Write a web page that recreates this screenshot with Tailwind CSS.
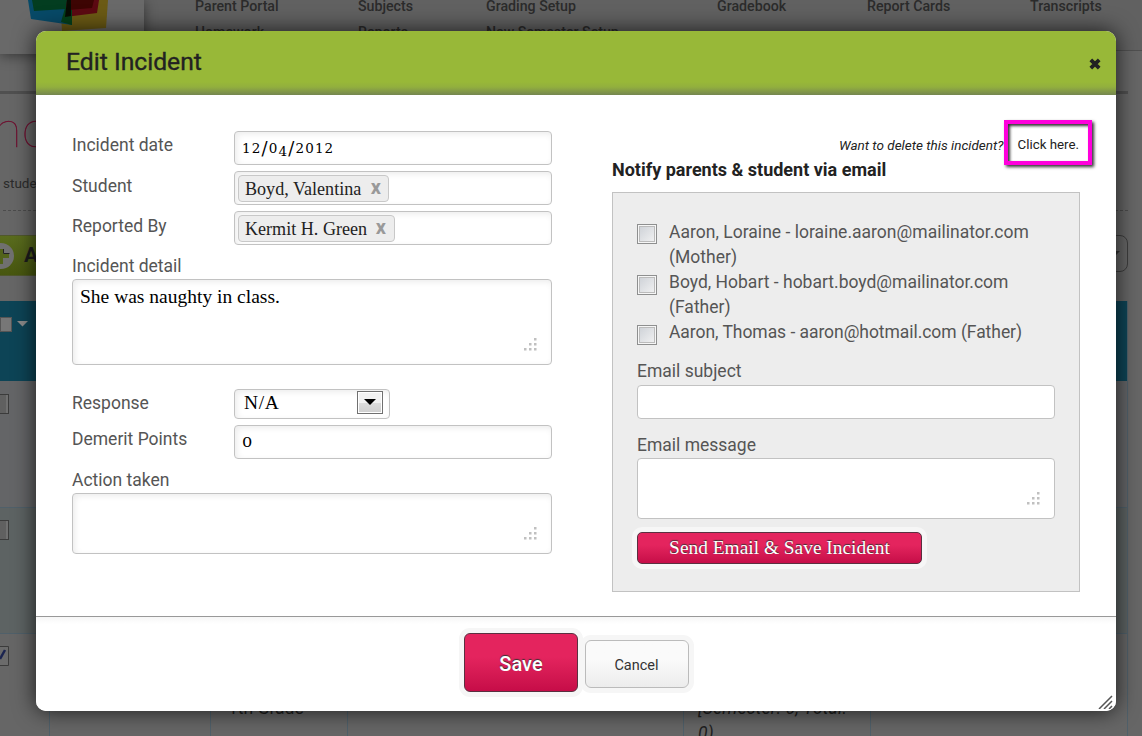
<!DOCTYPE html>
<html lang="en">
<head>
<meta charset="utf-8">
<title>Edit Incident</title>
<script src="https://cdn.jsdelivr.net/npm/@tailwindcss/browser@4"></script>
</head>
<body class="relative h-[736px] w-[1142px] overflow-hidden bg-[#666] font-['Roboto',sans-serif] text-[17.5px] text-[#555]">

<!-- Dimmed page -->
<div class="flex h-full flex-col">
  <header class="flex h-[51px] shrink-0 border-b border-[#505050] bg-[#616161]">
    <div class="z-10 flex h-[54px] w-[144px] shrink-0 justify-start bg-[#696969] pl-[28px] shadow-[0_2px_12px_rgba(0,0,0,.45)]">
      <svg width="82" height="31" viewBox="28 0 82 31">
        <path d="M60 0H108L106 28L62 31Z" fill="#6b5a14"/>
        <path d="M28 0H70L72 25L31 19Z" fill="#074a68"/>
        <path d="M66 0H99L97 13L65 17Z" fill="#5c0a12"/>
        <path d="M32 0H67L66 9L34 11Z" fill="#033d20"/>
        <path d="M65 8L72 10V25L61 22Z" fill="#04401a"/>
        <path d="M69 0H94L92 8L68 10Z" fill="#3d0503"/>
        <path d="M67 0H71V16L65 17Z" fill="#080c03"/>
      </svg>
    </div>
    <nav class="flex w-[998px] items-start pl-[51px] text-[14.2px] leading-[26px] font-medium text-[#2b2b2b]">
      <div class="-mt-[7px] w-[163px]">Parent Portal<br>Homework</div>
      <div class="-mt-[7px] w-[128px]">Subjects<br>Reports</div>
      <div class="-mt-[7px] w-[231px]">Grading Setup<br>New Semester Setup</div>
      <div class="-mt-[7px] w-[150px]">Gradebook</div>
      <div class="-mt-[7px] w-[163px]">Report Cards</div>
      <div class="-mt-[7px]">Transcripts</div>
    </nav>
  </header>
  <div class="flex h-[250px] shrink-0 flex-col">
    <div class="mt-10 mr-[14px] h-[3px] shrink-0 bg-[#505050]"></div>
    <h1 class="mt-0.5 -ml-[19px] h-[70px] shrink-0 font-['Lato',sans-serif] text-[52px] leading-[62px] font-thin text-[#6e1030] [-webkit-text-stroke:.5px_#6e1030]">Inc</h1>
    <p class="mt-[8px] h-[19px] shrink-0 pl-[3px] text-[13.5px] leading-[18px] text-[#2b2b2b]">students</p>
    <div class="mt-[17px] mr-[14px] ml-[3px] shrink-0 border-t border-dashed border-[#4c4c4c]"></div>
    <div class="mt-6 mr-[14px] flex shrink-0 justify-between">
      <div class="flex h-[41px] w-[120px] items-center border-y border-[#50582c] bg-gradient-to-b from-[#5a6c1e] to-[#47560f] text-[21px] font-bold text-[#1c1c1c]">
        <svg class="-ml-[12px] mr-[10px]" width="26" height="26" viewBox="0 0 26 26"><circle cx="13" cy="13" r="13" fill="#707070"/><path d="M11 6h4v5h6v4h-6v6h-4v-6H5v-4h6z" fill="#52631a"/><path d="M15.500 6v4.500h6" stroke="#222" fill="none"/></svg>Add
      </div>
      <div class="flex h-[37px] w-[140px] items-center justify-end rounded-lg border border-[#3d3d3d] pr-[7px]">
        <svg width="10" height="5"><path d="M0 0H10L5 5Z" fill="#333"/></svg>
      </div>
    </div>
  </div>
  <div class="mr-[14px] grow border-r border-[#50606a]">
    <div class="flex h-[80px] gap-[5px] bg-[#0d4456] pt-4">
      <span class="h-[15px] w-3 border border-[#555] bg-[#777]"></span>
      <svg class="mt-1" width="12" height="6"><path d="M0 0H11L5.5 5.5Z" fill="#8a8a8a"/></svg>
    </div>
    <div class="flex h-[127px] border-b border-[#50606a] bg-[#646567] pt-[13px]"><span class="h-5 w-[9px] border border-l-0 border-[#3b3b3b] bg-[#606060] shadow-[inset_-2px_0_0_#707070]"></span></div>
    <div class="flex h-[126px] border-b border-[#50606a] bg-[#5d6363] pt-3"><span class="h-5 w-[9px] border border-l-0 border-[#3b3b3b] bg-[#606060] shadow-[inset_-2px_0_0_#707070]"></span></div>
    <div class="flex h-[102px] text-[#1f1f1f]">
      <div class="w-[50px] border-r border-[#50606a] pt-3"><svg width="9" height="20"><path d="M0 .5H8.500V19.500H0" fill="#6b6b6b" stroke="#3b3b3b"/><path d="M0 13L5 4" stroke="#1b2450" stroke-width="2.500"/></svg></div>
      <div class="w-[161px] border-r border-[#50606a]"></div>
      <div class="w-[137px] border-r border-[#50606a] pt-[62px] pl-[17px] leading-[25px]">1th Grade</div>
      <div class="w-[336px] border-r border-[#50606a]"></div>
      <div class="w-[187px] border-r border-[#50606a] pt-[62px] pl-[14px] leading-[25px] tracking-[.25px] whitespace-nowrap italic">[Semester: 0, Total:<br>0)</div>
    </div>
  </div>
</div>

<!-- Dialog -->
<section class="absolute top-[31px] left-[36px] z-20 flex h-[680px] w-[1080px] flex-col overflow-hidden rounded-[10px] bg-white shadow-[0_0_22px_rgba(0,0,0,.75)]">
  <header class="flex h-[64px] shrink-0 items-center justify-between bg-[linear-gradient(to_bottom,#98b838_0,#98b838_51px,#92af3e_56px,#758650_64px)] pr-[15px] pl-[30px]">
    <h2 class="-mt-[3px] text-[24.7px] font-normal text-[#222] [-webkit-text-stroke:.35px_#222]">Edit Incident</h2>
    <svg class="mt-px" width="12" height="12" viewBox="0 0 12 12"><path d="M1.800 1.800L10.200 10.200M10.200 1.800L1.800 10.200" stroke="#222" stroke-width="3.800"/></svg>
  </header>

  <div class="flex h-[522px] shrink-0 justify-between border-b border-[#999] px-9 pt-9">
    <form class="flex w-[480px] flex-col">
      <div class="mb-1.5 flex h-[34px]">
        <label class="w-[162px] leading-[29px]">Incident date</label>
        <div class="flex grow items-start rounded-[4px] border border-[#c2c2c2] pt-[4px] pl-[7px] font-['DejaVu_Serif',serif] text-[13.5px] leading-[24px] tracking-[1.1px] text-black shadow-[inset_2px_2px_6px_rgba(0,0,0,.08)]"><span>12<span class="align-[-2px] text-[18px] leading-none tracking-[1.3px]">/</span>0<span class="align-[-3px]">4</span><span class="align-[-2px] text-[18px] leading-none tracking-[1.3px]">/</span>2012</span></div>
      </div>
      <div class="mb-1.5 flex h-[34px]">
        <label class="w-[162px] leading-[31px]">Student</label>
        <div class="flex grow items-center rounded-[4px] border border-[#c2c2c2] pl-[3px] shadow-[inset_2px_2px_6px_rgba(0,0,0,.08)]">
          <span class="mt-px flex h-[27px] w-[151px] items-center justify-between rounded-[4px] border border-[#c8c8c8] bg-[#ededed] pt-[2px] pr-[7px] pl-[6px] font-['Liberation_Serif',serif] text-[18.1px] leading-none text-[#222]">Boyd, Valentina<b class="-mt-[5px] font-['Roboto',sans-serif] text-[20px] leading-none text-[#999]">x</b></span>
        </div>
      </div>
      <div class="flex h-[34px]">
        <label class="w-[162px] leading-[31px]">Reported By</label>
        <div class="flex grow items-center rounded-[4px] border border-[#c2c2c2] pl-[3px] shadow-[inset_2px_2px_6px_rgba(0,0,0,.08)]">
          <span class="mt-px flex h-[27px] w-[157px] items-center justify-between rounded-[4px] border border-[#c8c8c8] bg-[#ededed] pt-[2px] pr-[8px] pl-[6px] font-['Liberation_Serif',serif] text-[18.1px] leading-none text-[#222]">Kermit H. Green<b class="-mt-[5px] font-['Roboto',sans-serif] text-[20px] leading-none text-[#999]">x</b></span>
        </div>
      </div>
      <label class="h-[34px] pt-[8px] leading-[27px]">Incident detail</label>
      <div class="flex h-[86px] justify-between rounded-[4px] border border-[#c2c2c2] pt-[5px] pr-[14px] pb-[13px] pl-[7px] font-['Liberation_Serif',serif] text-[19.5px] leading-[24px] text-black shadow-[inset_2px_2px_6px_rgba(0,0,0,.08)]">She was naughty in class.
        <svg class="self-end" width="13" height="13" fill="#c0c0c0"><path d="M10 0h2.500v2.500h-2.500zM5 5h2.500v2.500h-2.500zM10 5h2.500v2.500h-2.500zM0 10h2.500v2.500H0zM5 10h2.500v2.500H5zM10 10h2.500v2.500h-2.500z"/></svg>
      </div>
      <div class="mt-6 mb-1.5 flex h-[30px]">
        <label class="w-[162px] leading-[29px]">Response</label>
        <div class="flex w-[156px] items-center justify-between rounded-[4px] border border-[#c2c2c2] pr-[6px] pl-[9px] font-['Liberation_Serif',serif] text-[19.5px] leading-none text-black shadow-[inset_2px_2px_6px_rgba(0,0,0,.08)]"><span class="-mt-[2px] tracking-[.6px]">N/A</span>
          <span class="-mt-[3px] flex h-[23px] w-[26px] items-center justify-center border border-[#707070] bg-[linear-gradient(#f2f2f2_50%,#ddd_50%,#cfcfcf)] shadow-[inset_0_0_0_1px_#fff]"><svg class="-mt-px" width="12" height="6"><path d="M0 0H12L6 6Z" fill="#000"/></svg></span>
        </div>
      </div>
      <div class="flex h-[34px]">
        <label class="w-[162px] leading-[29px]">Demerit Points</label>
        <div class="flex grow items-start rounded-[4px] border border-[#c2c2c2] pt-[4px] pl-[7px] font-['DejaVu_Serif',serif] text-[13.5px] leading-[24px] text-black shadow-[inset_2px_2px_6px_rgba(0,0,0,.08)]"><span class="origin-left scale-x-120">0</span></div>
      </div>
      <label class="h-[34px] pt-[8px] leading-[27px]">Action taken</label>
      <div class="flex h-[61px] justify-end rounded-[4px] border border-[#c2c2c2] pr-[14px] pb-[13px] shadow-[inset_2px_2px_6px_rgba(0,0,0,.08)]">
        <svg class="self-end" width="13" height="13" fill="#c0c0c0"><path d="M10 0h2.500v2.500h-2.500zM5 5h2.500v2.500h-2.500zM10 5h2.500v2.500h-2.500zM0 10h2.500v2.500H0zM5 10h2.500v2.500H5zM10 10h2.500v2.500h-2.500z"/></svg>
      </div>
    </form>

    <div class="flex w-[468px] flex-col">
      <p class="flex h-[26px] justify-between pl-[227px] text-[13.5px] leading-[28px] whitespace-nowrap text-[#222]"><i>Want to delete this incident?</i><a class="mr-px text-[13.3px]">Click here.</a></p>
      <h3 class="h-[35px] text-[18px] leading-[25px] font-bold text-[#222]">Notify parents &amp; student via email</h3>
      <div class="flex h-[400px] flex-col border border-[#c2c2c2] bg-[#ededed] pt-[27px] pl-6">
        <ul class="h-[138px] w-[418px] leading-[25px]">
          <li class="flex gap-3"><span class="mt-[4px] h-5 w-5 shrink-0 border border-[#8e8f8f] bg-gradient-to-br from-[#cbcfd5] to-[#f4f4f4] shadow-[inset_0_0_0_1px_#f6f6f6,inset_0_0_0_2px_#bbb]"></span><span class="tracking-[.02px]">Aaron, Loraine - loraine.aaron@mailinator.com (Mother)</span></li>
          <li class="flex gap-3"><span class="mt-[5px] h-5 w-5 shrink-0 border border-[#8e8f8f] bg-gradient-to-br from-[#cbcfd5] to-[#f4f4f4] shadow-[inset_0_0_0_1px_#f6f6f6,inset_0_0_0_2px_#bbb]"></span><span>Boyd, Hobart - hobart.boyd@mailinator.com<br>(Father)</span></li>
          <li class="flex gap-3"><span class="mt-[5px] h-5 w-5 shrink-0 border border-[#8e8f8f] bg-gradient-to-br from-[#cbcfd5] to-[#f4f4f4] shadow-[inset_0_0_0_1px_#f6f6f6,inset_0_0_0_2px_#bbb]"></span><span class="tracking-[-.05px]">Aaron, Thomas - aaron@hotmail.com (Father)</span></li>
        </ul>
        <label class="h-[27px] leading-[26px]">Email subject</label>
        <div class="h-[34px] w-[418px] rounded-[4px] border border-[#c2c2c2] bg-white"></div>
        <label class="mt-[13px] h-[26px] leading-[27px]">Email message</label>
        <div class="flex h-[61px] w-[418px] justify-end rounded-[4px] border border-[#c2c2c2] bg-white pr-[14px] pb-[13px]">
          <svg class="self-end" width="13" height="13" fill="#c0c0c0"><path d="M10 0h2.500v2.500h-2.500zM5 5h2.500v2.500h-2.500zM10 5h2.500v2.500h-2.500zM0 10h2.500v2.500H0zM5 10h2.500v2.500H5zM10 10h2.500v2.500h-2.500z"/></svg>
        </div>
        <button class="mt-[13px] h-[32px] w-[285px] rounded-[5px] border border-[#5a3040] bg-gradient-to-b from-[#e4245e] from-40% to-[#c60c48] font-['Liberation_Serif',serif] text-[19.4px] leading-none text-white shadow-[0_0_0_5px_#f6f6f6] [text-shadow:0_-1px_1px_#333]">Send Email &amp; Save Incident</button>
      </div>
    </div>
  </div>

  <footer class="flex grow items-start gap-[7px] bg-[linear-gradient(#f6f6f6,#fff_7px)] pt-4 pl-[428px]">
    <button class="z-10 h-[59px] w-[114px] rounded-[6px] border border-[#5a3040] bg-gradient-to-b from-[#e4245e] from-40% to-[#c60c48] pt-[2px] text-[20px] font-medium text-white shadow-[0_0_0_5px_#f6f6f6] [text-shadow:0_-1px_1px_#333]">Save</button>
    <button class="mt-[7px] h-[48px] w-[104px] rounded-[6px] border border-[#bbb] bg-gradient-to-b from-[#fafafa] from-40% to-[#ececec] pt-[3px] pr-px text-[14.5px] text-[#333] shadow-[0_0_0_5px_#f6f6f6]">Cancel</button>
    <svg class="mr-[3px] mb-[2px] ml-auto self-end" width="15" height="15" stroke="#555" stroke-width="1.500"><path d="M1 15L14 2M6 15L14 7M11 15L14 12"/></svg>
  </footer>
</section>

<!-- Highlight around the delete link -->
<div class="absolute top-[120px] left-[1004px] z-30 h-[45px] w-[88px] border-4 border-[#ff00dc] shadow-[2px_2px_3px_rgba(0,0,0,.8),inset_2px_2px_3px_rgba(0,0,0,.8)]"></div>
</body>
</html>
